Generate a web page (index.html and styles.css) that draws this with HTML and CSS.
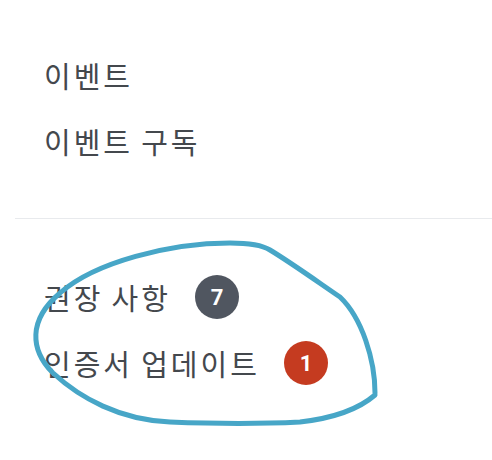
FILE: index.html
```html
<!DOCTYPE html>
<html lang="ko">
<head>
    <meta charset="UTF-8">
    <meta name="viewport" content="width=device-width, initial-scale=1.0">
    <title>메뉴</title>
    <link rel="stylesheet" href="styles.css">
</head>
<body>

    <!-- Side Menu -->
    <div class="menu">
        <div class="menu-group">
            <a href="#" class="menu-item">이벤트</a>
            <a href="#" class="menu-item">이벤트 구독</a>
        </div>

        <div class="menu-group">
            <a href="#" class="menu-item">권장 사항 <span class="badge badge-gray">7</span></a>
            <a href="#" class="menu-item">인증서 업데이트 <span class="badge badge-red">1</span></a>
        </div>
    </div>

    <!-- Hand-drawn annotation -->
    <svg class="scribble" viewBox="0 0 492 460" width="492" height="460">
        <path d="M375,393 C375,360 362,318 340,297 C318,282 290,262 270,250 C262,245 250,243 230,243 C170,243 95,262 60,293 C28,320 30,350 53,373 C80,398 120,420 170,422 C220,424 260,424 300,422 C335,418 360,408 375,395"
              fill="none" stroke="#47a6c7" stroke-width="5" stroke-linecap="round" stroke-linejoin="round"/>
    </svg>

</body>
</html>
```

FILE: styles.css
```css
/* Reset */
* {
    margin: 0;
    padding: 0;
    box-sizing: border-box;
}

body {
    background: #ffffff;
    font-family: 'Noto Sans CJK KR', 'Noto Sans', sans-serif;
    position: relative;
    width: 492px;
    height: 460px;
    overflow: hidden;
}

/* Side Menu */
.menu {
    margin-left: 15px;
    padding-top: 42px;
}

.menu-group {
    display: flex;
    flex-direction: column;
    padding-bottom: 44px;
}

.menu-group + .menu-group {
    border-top: 1px solid #e8eaed;
    padding-top: 45px;
}

.menu-item {
    display: flex;
    align-items: center;
    gap: 16px;
    height: 66px;
    padding-left: 29px;
    color: #44484d;
    font-size: 29px;
    letter-spacing: 3px;
    word-spacing: -3px;
    text-decoration: none;
    white-space: pre;
}

/* Badges */
.badge {
    display: inline-flex;
    align-items: center;
    justify-content: center;
    width: 44px;
    height: 44px;
    border-radius: 50%;
    color: #ffffff;
    font-family: Roboto, sans-serif;
    font-size: 22px;
    font-weight: 700;
    letter-spacing: 0;
}

.badge-gray {
    background: #505660;
}

.badge-red {
    background: #c53b20;
}

/* Annotation */
.scribble {
    position: absolute;
    top: 0;
    left: 0;
    pointer-events: none;
}
```
